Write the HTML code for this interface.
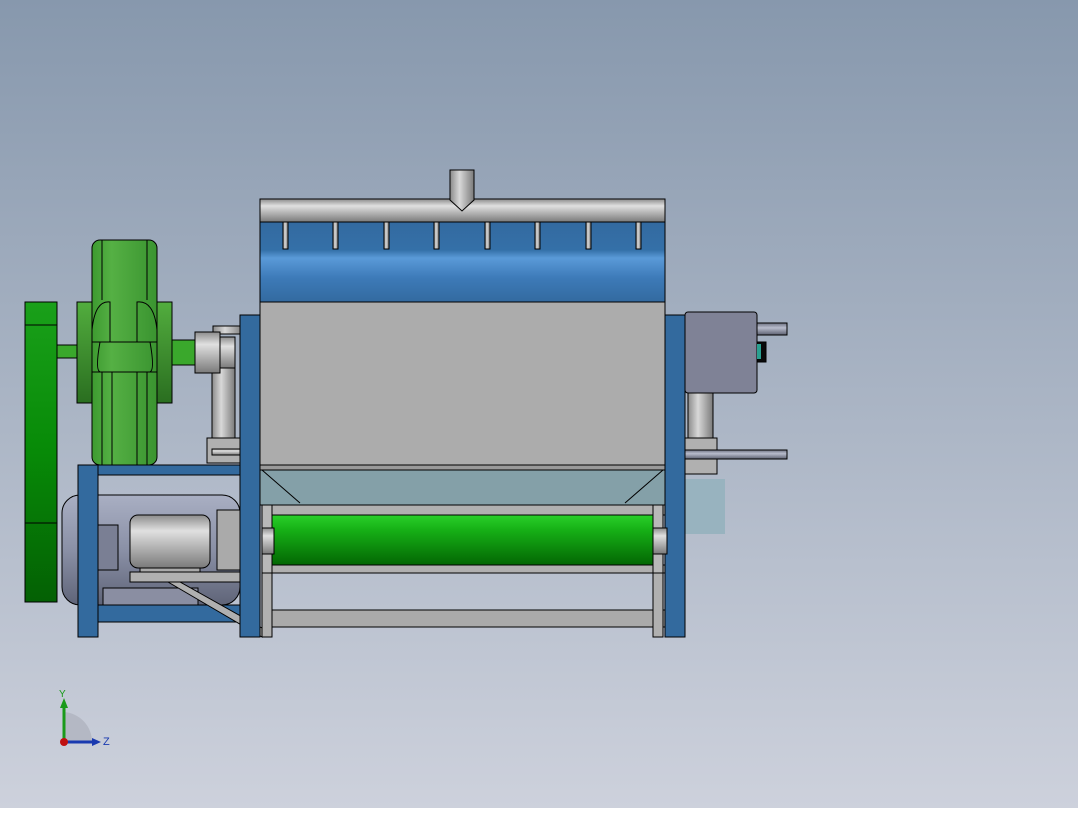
<!DOCTYPE html><html><head><style>html,body{margin:0;padding:0}body{width:1078px;height:808px;overflow:hidden}</style></head><body>
<svg width="1078" height="808" xmlns="http://www.w3.org/2000/svg" font-family="Liberation Sans, sans-serif">
<defs>
<linearGradient id="bg" x1="0" y1="0" x2="0" y2="1"><stop offset="0" stop-color="#8798ad"/><stop offset="1" stop-color="#cdd1dc"/></linearGradient>
<linearGradient id="pipe" x1="0" y1="0" x2="0" y2="1"><stop offset="0" stop-color="#8c8c8c"/><stop offset=".3" stop-color="#e0e0e0"/><stop offset="1" stop-color="#7a7a7a"/></linearGradient>
<linearGradient id="vpipe" x1="0" y1="0" x2="1" y2="0"><stop offset="0" stop-color="#8a8a8a"/><stop offset=".4" stop-color="#d8d8d8"/><stop offset="1" stop-color="#7a7a7a"/></linearGradient>
<linearGradient id="blue" x1="0" y1="0" x2="0" y2="1"><stop offset="0" stop-color="#336aa0"/><stop offset=".35" stop-color="#3470a8"/><stop offset=".45" stop-color="#5a9ad8"/><stop offset=".7" stop-color="#3d7ab8"/><stop offset="1" stop-color="#336aa0"/></linearGradient>
<linearGradient id="roll" x1="0" y1="0" x2="0" y2="1"><stop offset="0" stop-color="#2ad02a"/><stop offset=".3" stop-color="#16b016"/><stop offset="1" stop-color="#036603"/></linearGradient>
<linearGradient id="motor" x1="0" y1="0" x2="0" y2="1"><stop offset="0" stop-color="#a9afc3"/><stop offset=".5" stop-color="#8a90a6"/><stop offset="1" stop-color="#5f6478"/></linearGradient>
<linearGradient id="belt" x1="0" y1="0" x2="0" y2="1"><stop offset="0" stop-color="#1aa01a"/><stop offset=".5" stop-color="#078a07"/><stop offset="1" stop-color="#046004"/></linearGradient>
<linearGradient id="gb" x1="0" y1="0" x2="1" y2="0"><stop offset="0" stop-color="#3d9a30"/><stop offset=".3" stop-color="#55b044"/><stop offset="1" stop-color="#3a9430"/></linearGradient>
<linearGradient id="fl" x1="0" y1="0" x2="0" y2="1"><stop offset="0" stop-color="#52ad3e"/><stop offset="1" stop-color="#2a6e20"/></linearGradient>
<linearGradient id="rod" x1="0" y1="0" x2="0" y2="1"><stop offset="0" stop-color="#6c7080"/><stop offset=".4" stop-color="#b8bccc"/><stop offset="1" stop-color="#5c6070"/></linearGradient>
</defs>
<rect width="1078" height="808" fill="url(#bg)"/>
<g stroke="#000" stroke-width="1">
<!-- belt pulley -->
<rect x="57" y="345" width="22" height="13" fill="#3aa82c"/>
<rect x="25" y="302" width="32" height="300" fill="url(#belt)"/>
<line x1="25" y1="325" x2="57" y2="325"/><line x1="25" y1="523" x2="57" y2="523"/>
<!-- gearbox -->
<rect x="77" y="302" width="95" height="101" fill="url(#fl)"/>
<rect x="92" y="240" width="65" height="225" rx="8" fill="url(#gb)"/>
<path d="M92 330 Q95 300 110 302 L110 342 M157 330 Q154 300 137 302 L137 342 M92 342 L157 342 M100 342 Q95 370 100 372 M150 342 Q155 370 150 372 M92 372 L157 372 M102 372 V465 M112 372 V465 M137 372 V465 M147 372 V465 M102 240 V300 M147 240 V300" fill="none"/>
<rect x="172" y="340" width="28" height="25" fill="#3aa82c"/>
<!-- coupling & pipe -->
<rect x="212" y="365" width="23" height="75" fill="url(#vpipe)"/>
<rect x="213" y="326" width="30" height="8" fill="url(#vpipe)"/>
<rect x="195" y="332" width="25" height="41" fill="url(#pipe)"/>
<rect x="220" y="337" width="15" height="31" fill="url(#pipe)"/>
<rect x="207" y="438" width="33" height="25" fill="#b0b0b0"/>
<rect x="212" y="449" width="28" height="6" fill="url(#pipe)"/>
<!-- left frame -->
<rect x="62" y="495" width="178" height="110" rx="18" fill="url(#motor)"/>
<rect x="78" y="465" width="20" height="172" fill="#336a9e"/>
<rect x="98" y="465" width="162" height="10" fill="#336a9e"/>
<rect x="98" y="605" width="142" height="17" fill="#336a9e"/>
<rect x="103" y="588" width="95" height="17" fill="#8a8ea2"/>
<rect x="98" y="525" width="20" height="45" fill="#7a7f94"/>
<rect x="130" y="515" width="80" height="53" rx="8" fill="url(#pipe)"/>
<rect x="140" y="568" width="60" height="9" fill="#aaa"/>
<rect x="130" y="572" width="130" height="10" fill="#b0b0b0"/>
<path d="M168 582 L262 637 L262 628 L180 582Z" fill="#b0b0b0"/>
<rect x="217" y="510" width="40" height="60" fill="#aaa"/>
<!-- right side -->
<rect x="688" y="393" width="25" height="47" fill="url(#vpipe)"/>
<rect x="685" y="479" width="40" height="55" fill="#98b3bf" stroke="none"/>
<rect x="685" y="312" width="72" height="81" rx="3" fill="#7f8296"/>
<rect x="757" y="323" width="30" height="12" fill="url(#rod)"/>
<rect x="757" y="342" width="9" height="20" fill="#0a0a0a"/>
<rect x="757" y="344" width="4" height="15" fill="#2aa090" stroke="none"/>
<rect x="685" y="438" width="32" height="36" fill="#b0b0b0"/>
<rect x="665" y="450" width="122" height="9" fill="url(#rod)"/>
<!-- posts -->
<rect x="240" y="315" width="20" height="322" fill="#336a9e"/>
<rect x="665" y="315" width="20" height="322" fill="#336a9e"/>
<!-- hopper -->
<rect x="260" y="465" width="405" height="40" fill="#84a0a8"/>
<path d="M262 470 L300 503 M663 470 L625 503" fill="none"/>
<rect x="260" y="465" width="405" height="5" fill="#999"/>
<!-- body -->
<rect x="260" y="302" width="405" height="163" fill="#acacac"/>
<rect x="260" y="222" width="405" height="80" fill="url(#blue)"/>
<g fill="url(#vpipe)">
<rect x="283" y="222" width="5" height="27"/><rect x="333" y="222" width="5" height="27"/><rect x="384" y="222" width="5" height="27"/><rect x="434" y="222" width="5" height="27"/><rect x="485" y="222" width="5" height="27"/><rect x="535" y="222" width="5" height="27"/><rect x="586" y="222" width="5" height="27"/><rect x="636" y="222" width="5" height="27"/>
</g>
<rect x="260" y="199" width="405" height="23" fill="url(#pipe)"/>
<path d="M450 170 L474 170 L474 200 L462 211 L450 200Z" fill="url(#vpipe)"/>
<!-- roller & bottom frame -->
<rect x="262" y="505" width="403" height="10" fill="#b0b0b0"/>
<rect x="268" y="515" width="387" height="50" fill="url(#roll)"/>
<rect x="262" y="565" width="403" height="8" fill="#b0b0b0"/>
<rect x="262" y="610" width="403" height="17" fill="#aaa"/>
<rect x="262" y="573" width="10" height="64" fill="#b0b0b0"/>
<rect x="653" y="573" width="10" height="64" fill="#b0b0b0"/>
<rect x="262" y="505" width="10" height="68" fill="#b8b8b8"/>
<rect x="653" y="505" width="10" height="68" fill="#b8b8b8"/>
<rect x="262" y="528" width="12" height="26" fill="url(#pipe)"/>
<rect x="653" y="528" width="14" height="26" fill="url(#pipe)"/>
</g>
<!-- axis triad -->
<path d="M64 712 A30 30 0 0 1 92 742 L64 742Z" fill="#b4b8c4"/>
<line x1="64" y1="742" x2="64" y2="705" stroke="#1a9a1a" stroke-width="3"/>
<path d="M60 708 L64 698 L68 708Z" fill="#1a9a1a"/>
<line x1="64" y1="742" x2="94" y2="742" stroke="#1a3ab0" stroke-width="3"/>
<path d="M92 738 L101 742 L92 746Z" fill="#1a3ab0"/>
<circle cx="64" cy="742" r="4" fill="#c01010"/>
<text x="59" y="697" font-size="10" fill="#1a9a1a">Y</text>
<text x="103" y="745" font-size="11" fill="#1a3ab0">Z</text>
</svg>
</body></html>
